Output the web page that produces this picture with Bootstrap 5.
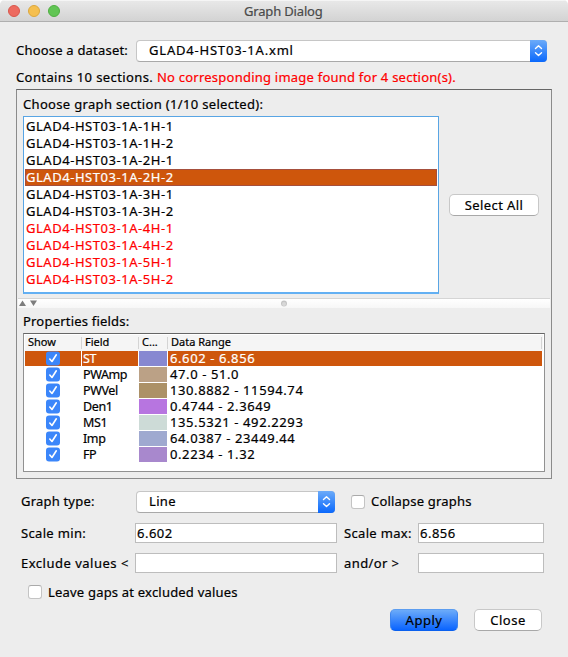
<!DOCTYPE html>
<html lang="en">
<head>
<meta charset="utf-8">
<meta name="viewport" content="width=device-width, initial-scale=1">
<title>Graph Dialog</title>
<link href="https://cdn.jsdelivr.net/npm/bootstrap@5.3.0/dist/css/bootstrap.min.css" rel="stylesheet">
<style>
body{font:13px/17px "Noto Sans","Open Sans",sans-serif;color:#000;background:#fff;width:568px;height:657px;overflow:hidden;-webkit-text-stroke:.2px}
.dlg{height:657px;background:#ededed;border-radius:5px 5px 0 0;overflow:hidden}
.titlebar{height:22px;background:linear-gradient(#e9e9e9,#d3d3d3);border-bottom:1px solid #afafaf;color:#4a4a4a;box-shadow:inset 0 1px #f5f5f5;padding-left:8px}
.dot{width:12px;height:12px;border-radius:50%;border:1px solid #d8574c;background:#ed6b60;margin-right:8px}
.dot-y{background:#f5bf4f;border-color:#dba73d}
.dot-g{background:#61c554;border-color:#4fae41}
.win-title{width:78px;margin-left:176px;line-height:20px;letter-spacing:-.17px;white-space:nowrap}
.t{white-space:nowrap}
.s02{letter-spacing:.2px}.s03{letter-spacing:.33px}.s04{letter-spacing:.4px}.s05{letter-spacing:.5px}.s08{letter-spacing:.8px}
.combo{height:22px;background:#fff;border:1px solid #c6c6c6;border-bottom-color:#a9a9a9;border-radius:4px;padding-left:12px}
.combo .t{margin-top:-1px}
.combo .stepper{width:17px;height:22px;margin:-1px -1px -1px 0;background:linear-gradient(#6cabf9,#0a68fc);border-radius:0 4px 4px 0}
.dataset-row{margin:18px 21px 0 16px;height:22px}
.dataset-row .lbl{width:120px;margin-top:-1px}
.status{margin:6px 0 0 16px;height:21px;line-height:19px}
.warn{color:#f00}
.status .warn{letter-spacing:.23px}
.panel{margin:0 16px;height:390px;border:1px solid #8b8b8b;border-top-color:#666}
.sect-title{padding:6px 0 0 6px;height:26px}
.sections{margin-left:6px;width:416px;height:178px;background:#fff;border:1px solid #59a5e4;border-bottom:2px solid #63b0f3;padding:1px}
.sections li{height:17px;line-height:17px;padding-left:1px;letter-spacing:.54px;white-space:nowrap}
.sections li.sel{background:#ce560c;color:#fff;border:1px solid #a64f3c;line-height:15px;padding-left:0}
.mbtn{height:22px;padding:0;border:1px solid #c8c8c8;border-bottom-color:#a8a8a8;border-radius:5px;background:#fff;color:#000;font:13px/18px "Noto Sans",sans-serif}
.mbtn.prime{background:linear-gradient(#6cabf9,#0a64ff);border-color:#5c9df0 #3c84ee #0a60ee}
.splitter{margin:5px 1px 0;height:9px;background:linear-gradient(#fff,#f7f7f7);box-shadow:0 -1px #d5d5d5;border-top:0}
.prop-title{height:25px;padding:5px 0 0 6px}
.fields{margin-left:6px;width:522px;height:139px;background:#fff;border:1px solid #919191;border-top-color:#666;padding:1px 1px 0}
.g{display:grid;grid-template-columns:57px 57px 29px 1fr}
.ghead{height:16px;background:#f5f5f5;font-size:11px;line-height:15px;padding-right:1px}
.ghead>div{border-right:1px solid #d4d4d4;height:12px;margin-top:2px;line-height:10px;white-space:nowrap;padding-left:3px}
.grow{height:16px;margin-right:1px}
.grow>div{height:15px;line-height:15px;white-space:nowrap}
.grow .nm{margin-right:1px;padding-left:1px;font-size:12.5px;letter-spacing:-.4px}
.grow .ck{padding-left:21px;margin-right:1px}
.grow .rg{padding-left:2px;letter-spacing:.6px}
.grow .sw{margin-right:1px}
.grow.sel .ck,.grow.sel .nm,.grow.sel .rg{background:#ce560c;color:#fff}
.ck svg{display:block}
.c1{background:#8788d1}.c2{background:#bba186}.c3{background:#ac9167}.c4{background:#b775e0}.c5{background:#cddbd7}.c6{background:#9fa9d0}.c7{background:#a888cd}
.form-area{padding:12px 24px 0 21px}
.lab{width:114px}
.type-row label{margin-top:-1px}
.fld{height:20px;border:1px solid #bdbdbd;background:#fff;line-height:18px;padding:0 1px}
.cb{width:14px;height:14px;background:#fff;border:1px solid #c4c4c4;border-top-color:#aaa;border-radius:3px}
#selectAll{width:90px;margin-left:10px;margin-top:-1px}
.type-combo{width:199px;margin-left:1px}
.collapse-cb{margin-left:16px;margin-top:-1px}
.cb-label{margin-left:6px}
.row-a,.row-b{margin-top:10px;height:20px}
.fmin{width:202px}.lab2{width:74px;margin-left:7px}.fmax{width:126px}
.row-c{margin:11px 0 0 7px;height:16px}
.acts{gap:16px;margin:9px 2px 0 0}
.acts .mbtn{width:68px}
</style>
<script src="https://cdn.jsdelivr.net/npm/bootstrap@5.3.0/dist/js/bootstrap.bundle.min.js"></script>
</head>
<body>
<main class="dlg d-flex flex-column">
  <header class="titlebar d-flex align-items-center flex-shrink-0">
    <span class="dot"></span><span class="dot dot-y"></span><span class="dot dot-g"></span>
    <span class="win-title">Graph Dialog</span>
  </header>

  <div class="dataset-row d-flex align-items-center flex-shrink-0">
    <label class="lbl t s02">Choose a dataset:</label>
    <div class="combo d-flex align-items-center justify-content-between flex-grow-1">
      <span class="t s08">GLAD4-HST03-1A.xml</span>
      <span class="stepper"><svg class="d-block" width="17" height="22" viewBox="0 0 17 22" fill="none" stroke="#fff" stroke-width="1.4" stroke-linecap="round" stroke-linejoin="round"><path d="M5.500 8.500 8.500 5.700l3 2.800M5.500 12.700l3 2.800 3-2.800"/></svg></span>
    </div>
  </div>
  <div class="status t flex-shrink-0"><span class="s04">Contains 10 sections. </span><span class="warn">No corresponding image found for 4 section(s).</span></div>

  <section class="panel flex-shrink-0">
    <div class="sect-title t s03">Choose graph section (1/10 selected):</div>
    <div class="d-flex align-items-center">
      <ul class="sections list-unstyled mb-0">
        <li>GLAD4-HST03-1A-1H-1</li><li>GLAD4-HST03-1A-1H-2</li><li>GLAD4-HST03-1A-2H-1</li>
        <li class="sel">GLAD4-HST03-1A-2H-2</li>
        <li>GLAD4-HST03-1A-3H-1</li><li>GLAD4-HST03-1A-3H-2</li>
        <li class="warn">GLAD4-HST03-1A-4H-1</li><li class="warn">GLAD4-HST03-1A-4H-2</li><li class="warn">GLAD4-HST03-1A-5H-1</li><li class="warn">GLAD4-HST03-1A-5H-2</li>
      </ul>
      <button class="btn mbtn s04" id="selectAll">Select All</button>
    </div>
    <div class="splitter"><svg class="d-block" width="532" height="9" viewBox="0 0 532 9"><path d="M1 7h7L4.500 1.500zM12 1.500h7L15.500 7z" fill="#7d7d7d"/><circle cx="266" cy="4.500" r="3" fill="#c4c4c4"/><circle cx="266" cy="5" r="2" fill="#d8d8d8"/></svg></div>
    <div class="prop-title t s02">Properties fields:</div>
    <div class="fields">
      <div class="g ghead"><div>Show</div><div>Field</div><div>C...</div><div>Data Range</div></div>
      <div id="rows">
        <div class="g grow sel"><div class="ck"></div><div class="nm">ST</div><div class="sw c1"></div><div class="rg">6.602 - 6.856</div></div>
        <div class="g grow"><div class="ck"></div><div class="nm">PWAmp</div><div class="sw c2"></div><div class="rg">47.0 - 51.0</div></div>
        <div class="g grow"><div class="ck"></div><div class="nm">PWVel</div><div class="sw c3"></div><div class="rg">130.8882 - 11594.74</div></div>
        <div class="g grow"><div class="ck"></div><div class="nm">Den1</div><div class="sw c4"></div><div class="rg">0.4744 - 2.3649</div></div>
        <div class="g grow"><div class="ck"></div><div class="nm">MS1</div><div class="sw c5"></div><div class="rg">135.5321 - 492.2293</div></div>
        <div class="g grow"><div class="ck"></div><div class="nm">Imp</div><div class="sw c6"></div><div class="rg">64.0387 - 23449.44</div></div>
        <div class="g grow"><div class="ck"></div><div class="nm">FP</div><div class="sw c7"></div><div class="rg">0.2234 - 1.32</div></div>
      </div>
    </div>
  </section>

  <section class="form-area flex-shrink-0">
    <div class="d-flex align-items-center type-row">
      <label class="lab t s02">Graph type:</label>
      <div class="combo type-combo d-flex align-items-center justify-content-between"><span class="t s03">Line</span>
        <span class="stepper"><svg class="d-block" width="17" height="22" viewBox="0 0 17 22" fill="none" stroke="#fff" stroke-width="1.4" stroke-linecap="round" stroke-linejoin="round"><path d="M5.500 8.500 8.500 5.700l3 2.800M5.500 12.700l3 2.800 3-2.800"/></svg></span></div>
      <span class="cb collapse-cb"></span><label class="t s02 cb-label">Collapse graphs</label>
    </div>
    <div class="d-flex align-items-center row-a">
      <label class="lab t s03">Scale min:</label><div class="fld fmin s05">6.602</div>
      <label class="lab2 t s03">Scale max:</label><div class="fld fmax s05">6.856</div>
    </div>
    <div class="d-flex align-items-center row-b">
      <label class="lab t s05">Exclude values &lt;</label><div class="fld fmin"></div>
      <label class="lab2 t s04">and/or &gt;</label><div class="fld fmax"></div>
    </div>
    <div class="d-flex align-items-center row-c"><span class="cb"></span><label class="t s02 cb-label">Leave gaps at excluded values</label></div>
    <div class="d-flex justify-content-end acts"><button class="btn mbtn prime s05">Apply</button><button class="btn mbtn s05">Close</button></div>
  </section>
</main>
<script>
document.querySelectorAll('.ck').forEach(c=>{c.innerHTML='<svg width="14" height="15" viewBox="0 0 14 15"><rect y=".5" width="14" height="14" rx="3" fill="#3b86fa"/><path d="M3.800 8 6 10.500l4.300-6.700" fill="none" stroke="#fff" stroke-width="1.600" stroke-linecap="round" stroke-linejoin="round"/></svg>'});
</script>
</body>
</html>
